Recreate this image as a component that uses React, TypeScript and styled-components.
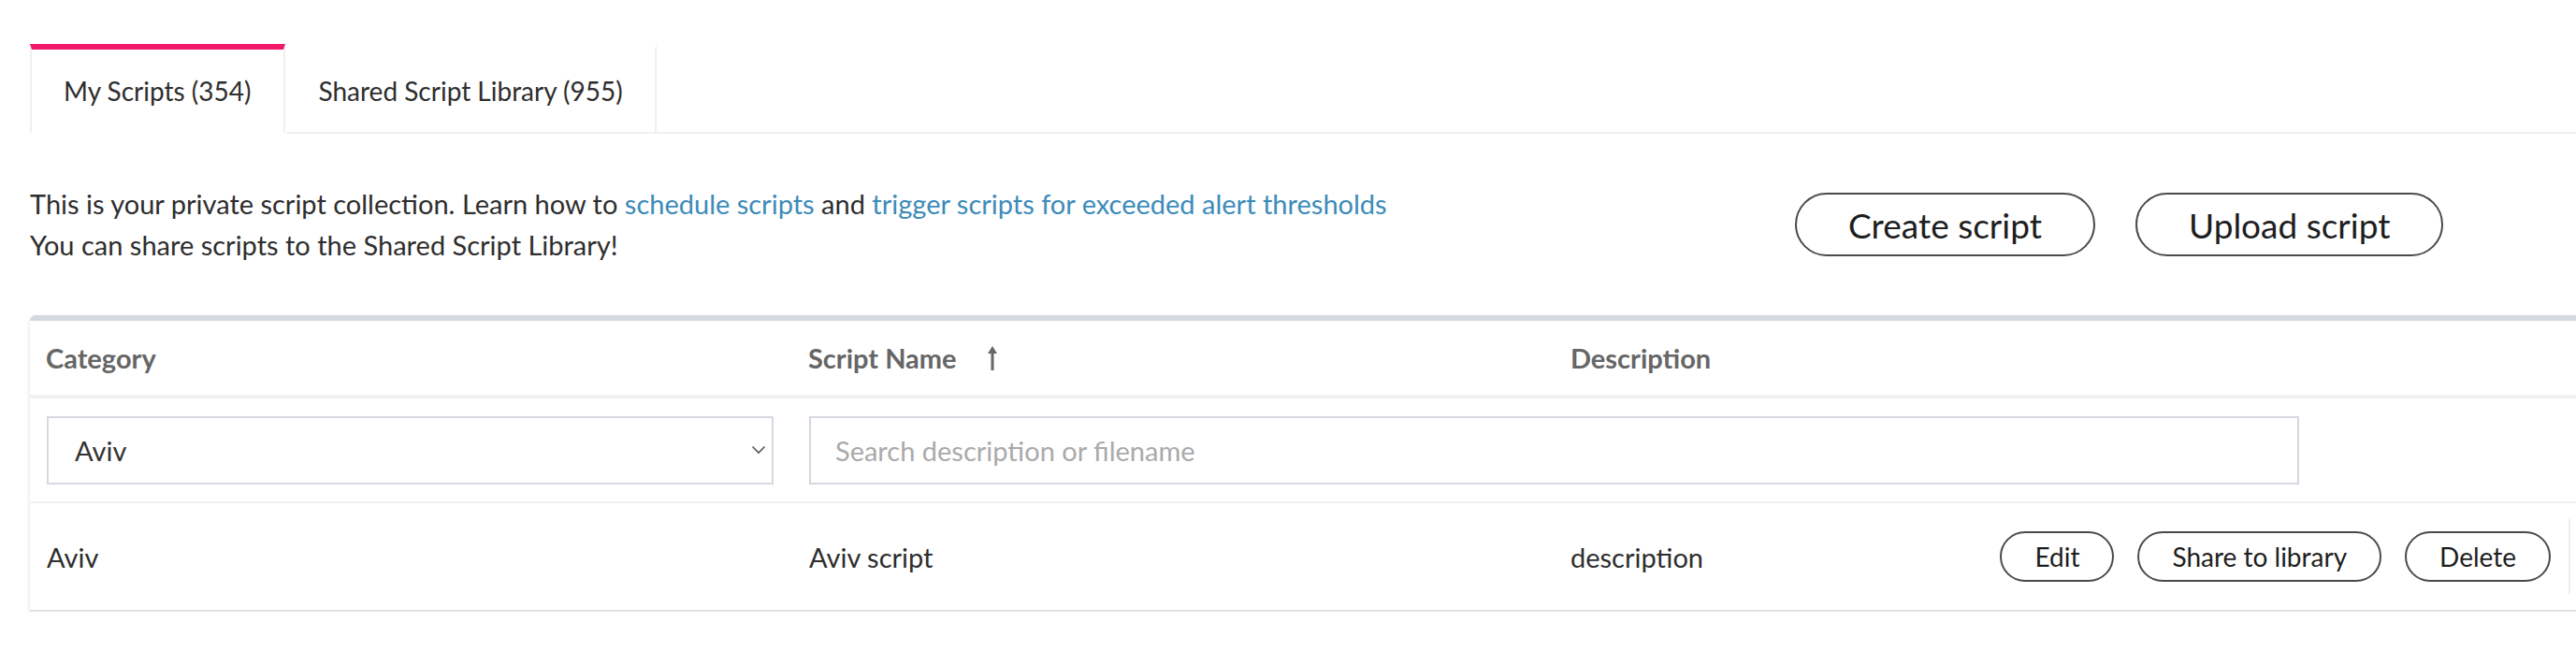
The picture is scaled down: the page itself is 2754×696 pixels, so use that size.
import React from "react";
import styled, { createGlobalStyle } from "styled-components";

const GlobalStyle = createGlobalStyle`
  html, body {
    margin: 0;
    padding: 0;
    background: #ffffff;
    overflow: hidden;
  }
  body {
    font-family: Lato, "Open Sans", sans-serif;
    color: #333333;
  }
  * { box-sizing: border-box; }
`;

const Page = styled.div`
  padding: 47px 0 0 32px;
  width: 3000px;
`;

const TabBar = styled.div`
  display: flex;
  border-bottom: 2px solid #f0f0f0;
`;

const Tab = styled.div<{ $active?: boolean }>`
  height: 96px;
  margin-bottom: -2px;
  padding: 0 34px;
  display: flex;
  align-items: center;
  font-size: 28px;
  color: #2e2e2e;
  background: #ffffff;
  border-top: 6px solid ${(p) => (p.$active ? "#ef1a6b" : "transparent")};
  border-left: 2px solid ${(p) => (p.$active ? "#f0f0f0" : "transparent")};
  border-right: 2px solid #f0f0f0;
  border-bottom: 2px solid ${(p) => (p.$active ? "#ffffff" : "#f0f0f0")};
`;

const Intro = styled.div`
  display: flex;
  align-items: center;
  margin-top: 53px;
`;

const IntroText = styled.p`
  flex: 0 0 1887px;
  margin: 0;
  font-size: 29px;
  line-height: 44px;
  color: #2e2e2e;
`;

const Link = styled.a`
  color: #3d8bb9;
  text-decoration: none;
`;

const ButtonGroup = styled.div<{ $gap: number }>`
  display: flex;
  align-items: center;
  gap: ${(p) => p.$gap}px;
`;

const PillButton = styled.button<{ $big?: boolean }>`
  font-family: Lato, "Open Sans", sans-serif;
  height: ${(p) => (p.$big ? 68 : 54)}px;
  padding: 0 ${(p) => (p.$big ? 55 : 35)}px;
  font-size: ${(p) => (p.$big ? 37 : 28)}px;
  color: #1e1e1e;
  background: #ffffff;
  border: 2px solid #4a4a4a;
  border-radius: 999px;
  white-space: nowrap;
  cursor: pointer;
`;

const Table = styled.div`
  margin-top: 53px;
  border-top: 6px solid #d5d8e0;
  border-bottom: 2px solid #e2e2e2;
  border-top-left-radius: 6px;
  background: #ffffff;
  box-shadow: 0 2px 4px rgba(0, 0, 0, 0.14);
`;

const Row = styled.div<{ $height: number; $divider: number }>`
  display: grid;
  grid-template-columns: 815px 815px 1084px 200px;
  height: ${(p) => p.$height}px;
  border-bottom: ${(p) => p.$divider}px solid #f1f1f1;
  align-items: center;
`;

const HeadCell = styled.div`
  padding: 0 17px;
  font-size: 29px;
  font-weight: 700;
  color: #666666;
  display: flex;
  align-items: center;
  gap: 32px;
`;

const Cell = styled.div<{ $span?: number }>`
  padding: 0 18px;
  font-size: 29px;
  color: #2e2e2e;
  grid-column: span ${(p) => p.$span ?? 1};
`;

const DescCell = styled.div`
  padding: 0 19px 0 17px;
  display: flex;
  align-items: center;
  justify-content: space-between;
  font-size: 29px;
  color: #2e2e2e;
`;

const EdgeCell = styled.div`
  height: 80px;
  border-left: 2px solid #eeeeee;
`;

const SelectBox = styled.div`
  width: 777px;
  height: 73px;
  border: 2px solid #d5d8e0;
  display: flex;
  align-items: center;
  justify-content: space-between;
  padding: 0 6px 0 28px;
  font-size: 29px;
  color: #333333;
`;

const SearchInput = styled.input`
  width: 1593px;
  height: 73px;
  border: 2px solid #d5d8e0;
  padding: 0 26px;
  font-family: Lato, "Open Sans", sans-serif;
  font-size: 29px;
  color: #333333;
  outline: none;
  &::placeholder {
    color: #aaaaaa;
  }
`;

const Chevron = () => (
  <svg width="16" height="10" viewBox="0 0 16 10" fill="none">
    <path d="M1.5 1.5 L8 8 L14.5 1.5" stroke="#555" strokeWidth="1.6" />
  </svg>
);

const SortArrow = () => (
  <svg width="12" height="27" viewBox="0 0 12 27" fill="none">
    <path d="M6 1 L11 9 L1 9 Z" fill="#666" />
    <rect x="4.5" y="8" width="3" height="19" fill="#666" />
  </svg>
);

export default function App() {
  return (
    <>
      <GlobalStyle />
      <Page>
        <TabBar>
          <Tab $active>My Scripts (354)</Tab>
          <Tab>Shared Script Library (955)</Tab>
        </TabBar>

        <Intro>
          <IntroText>
            This is your private script collection. Learn how to{" "}
            <Link href="#">schedule scripts</Link> and{" "}
            <Link href="#">trigger scripts for exceeded alert thresholds</Link>
            <br />
            You can share scripts to the Shared Script Library!
          </IntroText>
          <ButtonGroup $gap={43}>
            <PillButton $big>Create script</PillButton>
            <PillButton $big>Upload script</PillButton>
          </ButtonGroup>
        </Intro>

        <Table>
          <Row $height={83} $divider={4}>
            <HeadCell>Category</HeadCell>
            <HeadCell>
              Script Name <SortArrow />
            </HeadCell>
            <HeadCell>Description</HeadCell>
          </Row>
          <Row $height={112} $divider={2}>
            <Cell>
              <SelectBox>
                Aviv
                <Chevron />
              </SelectBox>
            </Cell>
            <Cell $span={2}>
              <SearchInput placeholder="Search description or filename" />
            </Cell>
          </Row>
          <Row $height={114} $divider={0}>
            <Cell>Aviv</Cell>
            <Cell>Aviv script</Cell>
            <DescCell>
              description
              <ButtonGroup $gap={25}>
                <PillButton>Edit</PillButton>
                <PillButton>Share to library</PillButton>
                <PillButton>Delete</PillButton>
              </ButtonGroup>
            </DescCell>
            <EdgeCell />
          </Row>
        </Table>
      </Page>
    </>
  );
}
